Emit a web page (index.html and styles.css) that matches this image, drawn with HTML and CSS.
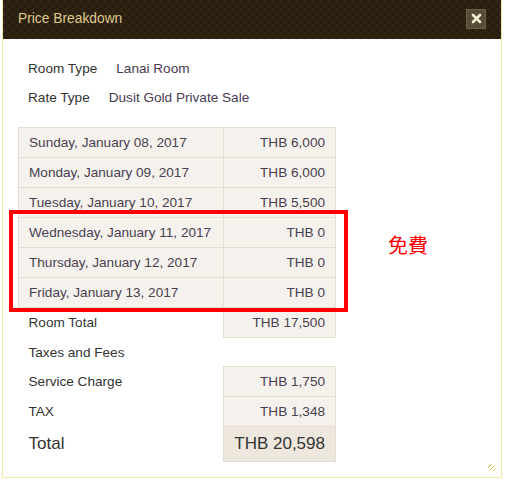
FILE: index.html
```html
<!DOCTYPE html>
<html>
<head>
    <meta name="viewport" content="width=device-width, initial-scale=1">
    <link rel="stylesheet" href="styles.css">
</head>
<body>
    <div class="dialog">
        <div class="dialog-header">
            <span class="dialog-title">Price Breakdown</span>
            <button class="close-btn" aria-label="Close">
                <svg width="11" height="11" viewBox="0 0 11 11">
                    <path d="M2 2 L9 9 M9 2 L2 9" stroke="#f3ecd2" stroke-width="2.6" stroke-linecap="round"/>
                </svg>
            </button>
        </div>

        <div class="dialog-body">
            <div class="info-row">
                <span class="info-label">Room Type</span>
                <span class="info-value">Lanai Room</span>
            </div>
            <div class="info-row">
                <span class="info-label">Rate Type</span>
                <span class="info-value">Dusit Gold Private Sale</span>
            </div>

            <table class="price-table">
                <tr class="night"><td>Sunday, January 08, 2017</td><td class="amount">THB 6,000</td></tr>
                <tr class="night"><td>Monday, January 09, 2017</td><td class="amount">THB 6,000</td></tr>
                <tr class="night"><td>Tuesday, January 10, 2017</td><td class="amount">THB 5,500</td></tr>
                <tr class="night"><td>Wednesday, January 11, 2017</td><td class="amount">THB 0</td></tr>
                <tr class="night"><td>Thursday, January 12, 2017</td><td class="amount">THB 0</td></tr>
                <tr class="night"><td>Friday, January 13, 2017</td><td class="amount">THB 0</td></tr>
                <tr class="sum"><td class="plain">Room Total</td><td class="amount">THB 17,500</td></tr>
                <tr class="section"><td class="plain" colspan="2">Taxes and Fees</td></tr>
                <tr class="sum"><td class="plain">Service Charge</td><td class="amount">THB 1,750</td></tr>
                <tr class="sum"><td class="plain">TAX</td><td class="amount">THB 1,348</td></tr>
                <tr class="grand"><td class="plain">Total</td><td class="amount">THB 20,598</td></tr>
            </table>
        </div>

        <span class="resize-grip"></span>
    </div>

    <!-- annotation drawn over the screenshot -->
    <div class="mark-box"></div>
    <div class="mark-note">免費</div>
</body>
</html>
```

FILE: styles.css
```css
body {
    margin: 0;
    padding: 0;
    background-color: #ffffff;
    font-family: "Liberation Sans", Arial, sans-serif;
    font-size: 13.6px;
    color: #333333;
}

.dialog {
    position: relative;
    margin-left: 2px;
    width: 498px;
    height: 477px;
    border: 1px solid #eee9a6;
    border-top: none;
    background-color: #ffffff;
}

/* Header with the dark diamond pattern */
.dialog-header {
    height: 39px;
    display: flex;
    align-items: center;
    justify-content: space-between;
    padding: 0 15px 0 15px;
    background-color: #2c200f;
    background-image:
        linear-gradient(45deg, rgba(255,255,255,0.035) 25%, transparent 25%, transparent 75%, rgba(255,255,255,0.035) 75%),
        linear-gradient(-45deg, rgba(0,0,0,0.12) 25%, transparent 25%, transparent 75%, rgba(0,0,0,0.12) 75%);
    background-size: 8px 8px, 8px 8px;
}

.dialog-title {
    color: #dfc88c;
    font-size: 13.8px;
    margin-top: -2px;
}

.close-btn {
    width: 20px;
    height: 20px;
    padding: 0;
    margin-top: -2px;
    border: 1px solid #6a5f48;
    background-color: #574c36;
    display: flex;
    align-items: center;
    justify-content: center;
}

.dialog-body {
    padding: 15px 0 0 15px;
}

.info-row {
    height: 29px;
    display: flex;
    align-items: center;
    padding-left: 10px;
}

.info-value {
    margin-left: 19px;
    color: #4a3a52;
}

/* Price table */
.price-table {
    margin-top: 15px;
    border-collapse: collapse;
}

.price-table td {
    height: 29px;
    padding: 0 10px;
    color: #4a3f50;
}

.price-table td:first-child {
    width: 184px;
}

.price-table td.amount {
    width: 91px;
    text-align: right;
    background-color: #f5f2ed;
    border: 1px solid #e4ddd0;
}

.night td {
    background-color: #f5f2ed;
    border: 1px solid #e4ddd0;
}

.price-table td.plain {
    color: #333333;
}

.section td {
    height: 28px;
}

.grand td {
    height: 34px;
    font-size: 17px;
}

.grand td.amount {
    background-color: #eee7dd;
    color: #333333;
}

.resize-grip {
    position: absolute;
    right: 6px;
    bottom: 6px;
    width: 7px;
    height: 7px;
    background-image: repeating-linear-gradient(135deg, transparent 0 2px, #d8d27a 2px 3px);
}

/* Red annotation */
.mark-box {
    position: absolute;
    left: 9px;
    top: 210px;
    width: 331px;
    height: 94px;
    border: 4px solid #ff0000;
}

.mark-note {
    position: absolute;
    left: 388px;
    top: 232px;
    font-family: "Noto Sans CJK TC", "Noto Sans CJK SC", sans-serif;
    font-size: 20px;
    line-height: 26px;
    color: #ff0000;
}
```
